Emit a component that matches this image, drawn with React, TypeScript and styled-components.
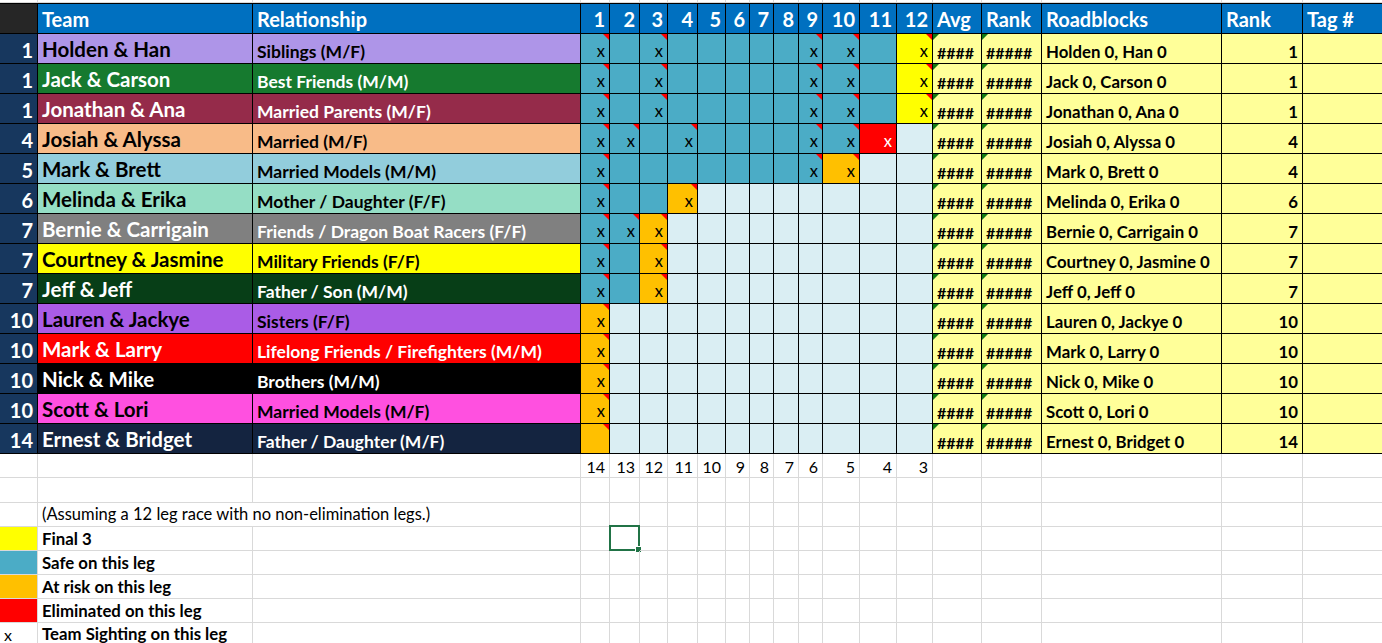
import React from 'react';
import styled, { createGlobalStyle, css } from 'styled-components';

const GlobalStyle = createGlobalStyle`
  html, body {
    margin: 0;
    padding: 0;
    background: #ffffff;
    overflow: hidden;
  }
  body {
    font-family: Lato, "Open Sans", "Liberation Sans", sans-serif;
  }
`;

const colWidths = [38, 215, 328, 29, 30, 28, 30, 28, 24, 24, 25, 24, 37, 37, 36, 49, 60, 180, 81, 80];

const Sheet = styled.div`
  display: grid;
  grid-template-columns: ${colWidths.map((w) => `${w}px`).join(' ')};
  grid-template-rows: 3px 31px repeat(14, 30px) 24px 25px 24px 24px 24px 24px 24px 23px;
  width: 1383px;
`;

type Align = 'left' | 'right';

const Cell = styled.div<{
  bg?: string;
  fg?: string;
  align?: Align;
  bold?: boolean;
  size?: number;
  grid?: boolean;
  top?: boolean;
  span?: number;
}>`
  position: relative;
  box-sizing: border-box;
  display: flex;
  align-items: flex-end;
  justify-content: ${({ align }) => (align === 'right' ? 'flex-end' : 'flex-start')};
  padding: 0 4px ${({ top }) => (top ? 2 : 1)}px 4px;
  background: ${({ bg }) => bg || 'transparent'};
  color: ${({ fg }) => fg || '#000'};
  font-weight: ${({ bold }) => (bold ? 700 : 400)};
  font-size: ${({ size }) => size || 15}px;
  line-height: 1.2;
  white-space: nowrap;
  overflow: visible;
  border-right: 1px solid ${({ grid }) => (grid ? '#d9d9d9' : '#000')};
  border-bottom: 1px solid ${({ grid }) => (grid ? '#d9d9d9' : '#000')};
  ${({ top }) => top && css`border-top: 1px solid #000;`}
  ${({ span }) => span && css`grid-column: span ${span};`}
`;

const Comment = styled.span`
  position: absolute;
  top: 0;
  right: 0;
  width: 0;
  height: 0;
  border-top: 6px solid #ff0000;
  border-left: 6px solid transparent;
`;

const ErrorFlag = styled.span`
  position: absolute;
  top: 0;
  left: 0;
  width: 0;
  height: 0;
  border-top: 6px solid #137a13;
  border-right: 6px solid transparent;
`;

const Selection = styled.span`
  position: absolute;
  left: -1px;
  top: -2px;
  right: -1px;
  bottom: -1px;
  border: 2px solid #217346;

  &::after {
    content: '';
    position: absolute;
    right: -4px;
    bottom: -4px;
    width: 5px;
    height: 5px;
    background: #217346;
    border: 1px solid #fff;
  }
`;

const leg = {
  S: '#4bacc6',
  R: '#ffc000',
  E: '#ff0000',
  F: '#ffff00',
  '-': '#daeef3',
};

type LegKey = keyof typeof leg;

type Team = {
  place: number;
  name: string;
  rel: string;
  bg: string;
  fg: string;
  legs: string;
  x: number[];
  notes?: number[];
  rank: number;
};

const teams: Team[] = [
  { place: 1, name: 'Holden & Han', rel: 'Siblings (M/F)', bg: '#ae95e8', fg: '#000', legs: 'SSSSSSSSSSSF', x: [1, 3, 9, 10, 12], rank: 1 },
  { place: 1, name: 'Jack & Carson', rel: 'Best Friends (M/M)', bg: '#167a2f', fg: '#fff', legs: 'SSSSSSSSSSSF', x: [1, 3, 9, 10, 12], rank: 1 },
  { place: 1, name: 'Jonathan & Ana', rel: 'Married Parents (M/F)', bg: '#952b4a', fg: '#fff', legs: 'SSSSSSSSSSSF', x: [1, 3, 9, 10, 12], rank: 1 },
  { place: 4, name: 'Josiah & Alyssa', rel: 'Married (M/F)', bg: '#f8bb88', fg: '#000', legs: 'SSSSSSSSSSE-', x: [1, 2, 4, 9, 10, 11], notes: [1, 2, 4, 9, 10], rank: 4 },
  { place: 5, name: 'Mark & Brett', rel: 'Married Models (M/M)', bg: '#92cddc', fg: '#000', legs: 'SSSSSSSSSR--', x: [1, 9, 10], rank: 4 },
  { place: 6, name: 'Melinda & Erika', rel: 'Mother / Daughter (F/F)', bg: '#95dec5', fg: '#000', legs: 'SSSR--------', x: [1, 4], rank: 6 },
  { place: 7, name: 'Bernie & Carrigain', rel: 'Friends / Dragon Boat Racers (F/F)', bg: '#808080', fg: '#fff', legs: 'SSR---------', x: [1, 2, 3], rank: 7 },
  { place: 7, name: 'Courtney & Jasmine', rel: 'Military Friends (F/F)', bg: '#ffff00', fg: '#000', legs: 'SSR---------', x: [1, 3], rank: 7 },
  { place: 7, name: 'Jeff & Jeff', rel: 'Father / Son (M/M)', bg: '#073e17', fg: '#fff', legs: 'SSR---------', x: [1, 3], rank: 7 },
  { place: 10, name: 'Lauren & Jackye', rel: 'Sisters (F/F)', bg: '#aa5ce6', fg: '#000', legs: 'R-----------', x: [1], rank: 10 },
  { place: 10, name: 'Mark & Larry', rel: 'Lifelong Friends / Firefighters (M/M)', bg: '#ff0000', fg: '#fff', legs: 'R-----------', x: [1], rank: 10 },
  { place: 10, name: 'Nick & Mike', rel: 'Brothers (M/M)', bg: '#000000', fg: '#fff', legs: 'R-----------', x: [1], rank: 10 },
  { place: 10, name: 'Scott & Lori', rel: 'Married Models (M/F)', bg: '#ff50e0', fg: '#000', legs: 'R-----------', x: [1], rank: 10 },
  { place: 14, name: 'Ernest & Bridget', rel: 'Father / Daughter (M/F)', bg: '#142440', fg: '#fff', legs: 'R-----------', x: [], notes: [1], rank: 14 },
];

const legNums = Array.from({ length: 12 }, (_, i) => i + 1);
const countdown = [14, 13, 12, 11, 10, 9, 8, 7, 6, 5, 4, 3];

const HEAD = '#0070c0';
const PANEL = '#ffff99';
const RANK_BG = '#17375e';

const legend = [
  { swatch: '#ffff00', label: 'Final 3' },
  { swatch: '#4bacc6', label: 'Safe on this leg' },
  { swatch: '#ffc000', label: 'At risk on this leg' },
  { swatch: '#ff0000', label: 'Eliminated on this leg' },
  { swatch: '', label: 'Team Sighting on this leg', mark: 'x' },
];

const blankRow = (key: string, from = 0) =>
  colWidths.slice(from).map((_, i) => <Cell key={`${key}-${i}`} grid />);

export default function App() {
  return (
    <>
      <GlobalStyle />
      <Sheet>
        {blankRow('top')}

        <Cell top bg="#262626" />
        <Cell top bg={HEAD} fg="#fff" bold size={20}>Team</Cell>
        <Cell top bg={HEAD} fg="#fff" bold size={20}>Relationship</Cell>
        {legNums.map((n) => (
          <Cell key={`h${n}`} top bg={HEAD} fg="#fff" bold size={20} align="right">{n}</Cell>
        ))}
        <Cell top bg={HEAD} fg="#fff" bold size={20}>Avg</Cell>
        <Cell top bg={HEAD} fg="#fff" bold size={20}>Rank</Cell>
        <Cell top bg={HEAD} fg="#fff" bold size={20}>Roadblocks</Cell>
        <Cell top bg={HEAD} fg="#fff" bold size={20}>Rank</Cell>
        <Cell top bg={HEAD} fg="#fff" bold size={20}>Tag #</Cell>

        {teams.map((t, r) => {
          const [a, b] = t.name.split(' & ');
          const notes = t.notes || t.x;
          return (
            <React.Fragment key={r}>
              <Cell bg={RANK_BG} fg="#fff" bold size={20} align="right">{t.place}</Cell>
              <Cell bg={t.bg} fg={t.fg} bold size={20.5}>{t.name}</Cell>
              <Cell bg={t.bg} fg={t.fg} bold size={17.5}>{t.rel}</Cell>
              {legNums.map((n) => {
                const k = t.legs[n - 1] as LegKey;
                return (
                  <Cell key={n} bg={leg[k]} fg={k === 'E' ? '#fff' : '#000'} size={16.5} align="right">
                    {t.x.includes(n) ? 'x' : ''}
                    {notes.includes(n) && <Comment />}
                  </Cell>
                );
              })}
              <Cell bg={PANEL} bold size={16}>####<ErrorFlag /></Cell>
              <Cell bg={PANEL} bold size={16}>#####<ErrorFlag /></Cell>
              <Cell bg={PANEL} bold size={16.8}>{`${a} 0, ${b} 0`}</Cell>
              <Cell bg={PANEL} bold size={16.8} align="right">{t.rank}</Cell>
              <Cell bg={PANEL} />
            </React.Fragment>
          );
        })}

        <Cell grid />
        <Cell grid />
        <Cell grid />
        {countdown.map((n) => (
          <Cell key={`c${n}`} grid size={16} align="right">{n}</Cell>
        ))}
        {blankRow('cd', 15)}

        {blankRow('gap')}

        <Cell grid />
        <Cell grid span={2} size={16.5}>(Assuming a 12 leg race with no non-elimination legs.)</Cell>
        {blankRow('note', 3)}

        {legend.map((l, i) => (
          <React.Fragment key={l.label}>
            <Cell grid bg={l.swatch || undefined} size={16}>{l.mark}</Cell>
            <Cell grid bold size={16.8}>{l.label}</Cell>
            <Cell grid />
            <Cell grid />
            <Cell grid>{i === 0 && <Selection />}</Cell>
            {blankRow(`lg${i}`, 5)}
          </React.Fragment>
        ))}
      </Sheet>
    </>
  );
}
